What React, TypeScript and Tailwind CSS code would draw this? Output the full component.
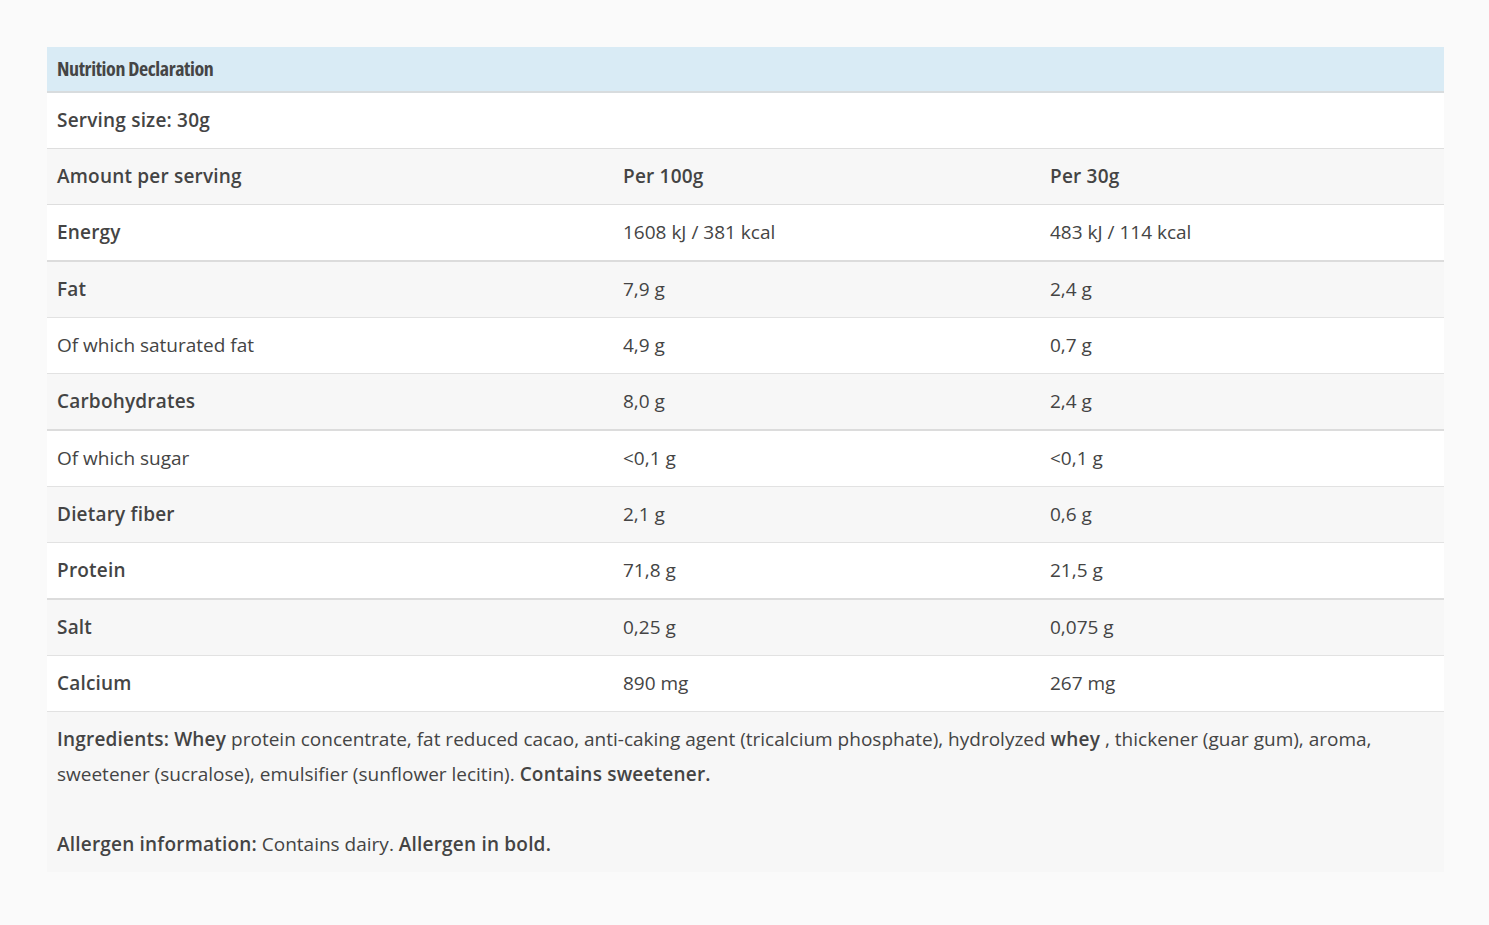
import React from 'react';

type Row = {
  label: string;
  per100: string;
  perServing: string;
  bold?: boolean;
  thick?: boolean;
};

const rows: Row[] = [
  { label: 'Energy', per100: '1608 kJ / 381 kcal', perServing: '483 kJ / 114 kcal', bold: true, thick: true },
  { label: 'Fat', per100: '7,9 g', perServing: '2,4 g', bold: true },
  { label: 'Of which saturated fat', per100: '4,9 g', perServing: '0,7 g' },
  { label: 'Carbohydrates', per100: '8,0 g', perServing: '2,4 g', bold: true, thick: true },
  { label: 'Of which sugar', per100: '<0,1 g', perServing: '<0,1 g' },
  { label: 'Dietary fiber', per100: '2,1 g', perServing: '0,6 g', bold: true },
  { label: 'Protein', per100: '71,8 g', perServing: '21,5 g', bold: true, thick: true },
  { label: 'Salt', per100: '0,25 g', perServing: '0,075 g', bold: true },
  { label: 'Calcium', per100: '890 mg', perServing: '267 mg', bold: true },
];

const cols = 'grid grid-cols-[566px_427px_1fr]';
const strong = 'font-[650] tracking-[0.2px]';
const plain = 'font-normal';

export default function App() {
  return (
    <div className="min-h-[925px] bg-[#fafafa] px-[47px] pt-[47px] font-['Open_Sans',sans-serif] text-[19px] text-[#444]">
      <div className="w-[1397px]">
        {/* title bar */}
        <div className="h-[46px] border-b-2 border-[#d8dcde] bg-[#d9ebf5] px-[10px] flex items-center">
          <h2 className="text-[20px] font-bold text-[#454545] [font-stretch:75%] tracking-[-0.4px]">
            Nutrition Declaration
          </h2>
        </div>

        <div className={`h-[56px] bg-white px-[10px] flex items-center border-b border-[#dedede] ${strong}`}>
          Serving size: 30g
        </div>

        <div className={`${cols} h-[56px] items-center bg-[#f7f7f7] border-b border-[#dedede] ${strong}`}>
          <div className="px-[10px]">Amount per serving</div>
          <div className="px-[10px]">Per 100g</div>
          <div className="px-[10px]">Per 30g</div>
        </div>

        {rows.map((r, i) => (
          <div
            key={r.label}
            className={`${cols} items-center ${i % 2 === 0 ? 'bg-white' : 'bg-[#f7f7f7]'} ${
              r.thick ? 'h-[57px] border-b-2 border-[#dcdcdc]' : 'h-[56px] border-b border-[#e2e2e2]'
            }`}
          >
            <div className={`px-[10px] ${r.bold ? strong : plain}`}>{r.label}</div>
            <div className={`px-[10px] ${plain}`}>{r.per100}</div>
            <div className={`px-[10px] ${plain}`}>{r.perServing}</div>
          </div>
        ))}

        <div className={`bg-[#f7f7f7] pl-[10px] pr-[60px] py-[10px] leading-[35px] ${plain}`}>
          <p>
            <b className={strong}>Ingredients: Whey</b> protein concentrate, fat reduced cacao, anti-caking agent
            (tricalcium phosphate), hydrolyzed <b className={strong}>whey</b> , thickener (guar gum), aroma,
            sweetener (sucralose), emulsifier (sunflower lecitin). <b className={strong}>Contains sweetener.</b>
          </p>
          <br />
          <p>
            <b className={strong}>Allergen information:</b> Contains dairy.{' '}
            <b className={strong}>Allergen in bold.</b>
          </p>
        </div>
      </div>
    </div>
  );
}
